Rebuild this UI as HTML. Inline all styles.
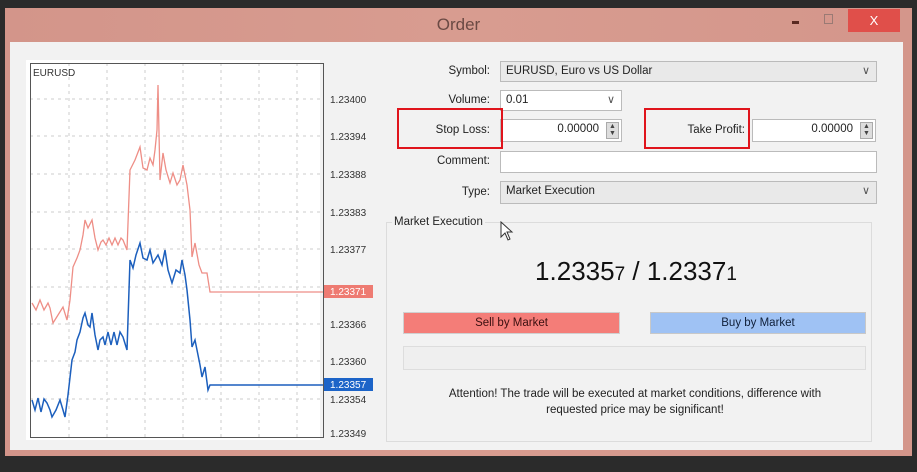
<!DOCTYPE html>
<html><head><meta charset="utf-8"><style>
*{margin:0;padding:0;box-sizing:border-box}
body{width:917px;height:472px;background:#2b2b2b;position:relative;overflow:hidden;font-family:"Liberation Sans",sans-serif;font-size:11.5px;color:#222}
.a{position:absolute}
.lbl{position:absolute;text-align:right;width:120px;font-size:11.5px;color:#222}
.inp{position:absolute;background:#fff;border:1px solid #bbb;font-size:11.5px;padding:3px 5px}
.sel{background:#e9e9e9}
.chev{position:absolute;right:6px;top:2px;color:#555;font-size:11px}
.spin{position:absolute;right:2px;top:2px;width:13px;height:17px;background:#ddd;border:1px solid #aaa;font-size:7px;line-height:7px;text-align:center;color:#444}
.rb{position:absolute;border:2px solid #e0141c}
</style></head><body>
<div class="a" style="left:5px;top:8px;width:907px;height:448px;background:linear-gradient(90deg,#d3958a,#d89c90 50%,#d4968b)"></div>
<div class="a" style="left:0;top:8px;width:917px;text-align:center;font-size:17px;color:#6b4a44;line-height:34px">Order</div>
<div class="a" style="left:792px;top:21px;width:7px;height:3px;background:#5a2a22"></div>
<div class="a" style="left:824px;top:14px;width:9px;height:10px;border:1px solid #9a7a74"></div>
<div class="a" style="left:848px;top:9px;width:52px;height:23px;background:#e04f4a;color:#fff;text-align:center;font-size:13px;line-height:23px">X</div>
<div class="a" style="left:10px;top:42px;width:893px;height:408px;background:#f2f2f2"></div>
<div class="a" style="left:26px;top:60px;width:294px;height:380px;background:#fff"></div>
<svg class="a" style="left:0;top:0" width="917" height="472">
<g stroke="#ccc" stroke-dasharray="3,4" stroke-width="1">
<line x1="30" y1="99" x2="323" y2="99"/><line x1="30" y1="136" x2="323" y2="136"/><line x1="30" y1="174" x2="323" y2="174"/><line x1="30" y1="212" x2="323" y2="212"/><line x1="30" y1="249" x2="323" y2="249"/><line x1="30" y1="287" x2="323" y2="287"/><line x1="30" y1="324" x2="323" y2="324"/><line x1="30" y1="361" x2="323" y2="361"/><line x1="30" y1="399" x2="323" y2="399"/>
<line x1="69" y1="63" x2="69" y2="437"/><line x1="107" y1="63" x2="107" y2="437"/><line x1="145" y1="63" x2="145" y2="437"/><line x1="183" y1="63" x2="183" y2="437"/><line x1="221" y1="63" x2="221" y2="437"/><line x1="259" y1="63" x2="259" y2="437"/><line x1="297" y1="63" x2="297" y2="437"/>
</g>
<rect x="30.5" y="63.5" width="293" height="374" fill="none" stroke="#555"/>
<polyline fill="none" stroke="#ee8e86" stroke-width="1.3" points="32,303 36,310 40,300 44,310 48,303 50,308 53,323 58,315 63,307 67,320 70,300 73,267 77,258 80,250 83,235 85,220 88,228 92,220 95,238 98,250 101,242 103,240 106,245 109,238 112,245 115,238 118,245 121,238 123,240 127,250 130,170 135,160 140,147 143,168 147,170 150,158 153,165 155,150 157,130 158,85 160,180 163,153 166,170 170,183 173,173 177,185 180,180 183,165 187,185 190,210 192,257 195,243 199,265 202,273 207,273 210,292 323,292"/>
<polyline fill="none" stroke="#1c5fbd" stroke-width="1.5" points="32,400 35,410 38,398 41,412 44,399 47,403 50,410 52,417 56,410 60,400 63,410 65,417 68,395 72,360 75,352 77,340 80,332 83,318 85,313 88,325 90,327 92,313 95,335 98,350 100,340 103,337 105,345 108,332 111,345 114,332 117,345 120,332 123,337 127,350 130,260 133,268 136,255 140,243 143,258 147,260 150,250 153,263 158,255 162,265 165,250 168,270 172,283 176,270 180,273 182,260 185,275 187,290 190,320 192,347 195,340 197,350 200,365 202,377 205,367 208,390 210,385 323,385"/>
<g font-family="Liberation Sans,sans-serif" font-size="10" fill="#333">
<text x="33" y="76">EURUSD</text>
<text x="330" y="103">1.23400</text><text x="330" y="140">1.23394</text><text x="330" y="178">1.23388</text><text x="330" y="216">1.23383</text><text x="330" y="253">1.23377</text><text x="330" y="328">1.23366</text><text x="330" y="365">1.23360</text><text x="330" y="403">1.23354</text><text x="330" y="437">1.23349</text>
</g>
<rect x="324" y="285" width="49" height="13" fill="#ee7b72"/>
<text x="330" y="295" font-family="Liberation Sans,sans-serif" font-size="10" fill="#fff">1.23371</text>
<rect x="324" y="378" width="49" height="13" fill="#1c64c8"/>
<text x="330" y="388" font-family="Liberation Sans,sans-serif" font-size="10" fill="#fff">1.23357</text>
</svg>
<div class="lbl" style="left:370px;top:65px">Symbol:</div>
<div class="inp sel" style="left:500px;top:61px;width:377px;height:21px">EURUSD, Euro vs US Dollar<span class="chev">&#8744;</span></div>
<div class="lbl" style="left:370px;top:94px">Volume:</div>
<div class="inp" style="left:500px;top:90px;width:122px;height:21px">0.01<span class="chev">&#8744;</span></div>
<div class="lbl" style="left:370px;top:124px">Stop Loss:</div>
<div class="inp" style="left:500px;top:119px;width:122px;height:23px;text-align:right;padding-right:22px">0.00000<span class="spin">▲<br>▼</span></div>
<div class="lbl" style="left:625px;top:124px">Take Profit:</div>
<div class="inp" style="left:752px;top:119px;width:124px;height:23px;text-align:right;padding-right:22px">0.00000<span class="spin">▲<br>▼</span></div>
<div class="rb" style="left:397px;top:108px;width:106px;height:41px"></div>
<div class="rb" style="left:644px;top:108px;width:106px;height:41px"></div>
<div class="lbl" style="left:370px;top:155px">Comment:</div>
<div class="inp" style="left:500px;top:151px;width:377px;height:22px"></div>
<div class="lbl" style="left:370px;top:186px">Type:</div>
<div class="inp sel" style="left:500px;top:181px;width:377px;height:23px">Market Execution<span class="chev">&#8744;</span></div>
<div class="a" style="left:386px;top:222px;width:486px;height:220px;border:1px solid #dcdcdc"></div>
<div class="a" style="left:392px;top:216px;background:#f2f2f2;padding:0 2px;font-size:11.5px">Market Execution</div>
<svg class="a" style="left:500px;top:221px" width="16" height="22"><path d="M1 1 L1 16 L5 12 L8 19 L10 18 L7 11 L12 11 Z" fill="#fff" stroke="#333" stroke-width="1"/></svg>
<div class="a" style="left:376px;top:256px;width:520px;text-align:center;font-size:26px;color:#111">1.2335<span style="font-size:19px">7</span> / 1.2337<span style="font-size:19px">1</span></div>
<div class="a" style="left:403px;top:312px;width:217px;height:22px;background:#f47d78;border:1px solid #d0d0d0;text-align:center;line-height:20px;color:#3a1010">Sell by Market</div>
<div class="a" style="left:650px;top:312px;width:216px;height:22px;background:#9fc2f4;border:1px solid #c8c8c8;text-align:center;line-height:20px;color:#10203a">Buy by Market</div>
<div class="a" style="left:403px;top:346px;width:463px;height:24px;border:1px solid #ddd;background:#efefef"></div>
<div class="a" style="left:380px;top:386px;width:510px;text-align:center;line-height:16px;font-size:11.5px">Attention! The trade will be executed at market conditions, difference with<br>requested price may be significant!</div>
</body></html>
